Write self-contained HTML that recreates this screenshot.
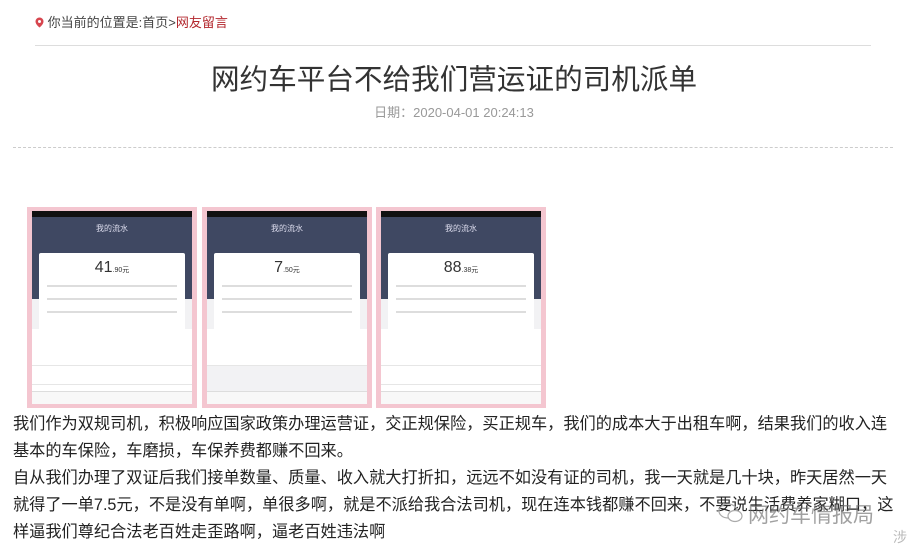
<!DOCTYPE html>
<html><head><meta charset="utf-8"><style>
body{margin:0;width:908px;height:551px;overflow:hidden;background:#fff;font-family:"Liberation Sans","Noto Sans CJK SC",sans-serif;position:relative}
.abs{position:absolute}
.phone{position:absolute;top:207px;width:170px;height:201px;background:#f4c6d0;}
.in{position:absolute;left:5px;top:4px;right:5px;bottom:4px;background:#f2f2f4;overflow:hidden}
.sb{height:6px;background:#111}
.hd{height:82px;background:#3f4862;position:relative;color:#dde}
.card{position:absolute;left:7px;top:36px;right:7px;height:82px;background:#fff;border-radius:2px;z-index:2}
.row{position:absolute;left:0;right:0;height:18px;border-bottom:1px solid #e6e6e6;font-size:6px;color:#666}
.nav{position:absolute;bottom:0;left:0;right:0;height:12px;background:#f8f8f8;border-top:1px solid #ddd}
.ln{position:absolute;left:8px;right:8px;height:2px;background:#ddd}
p{margin:0}
</style></head><body>
<div class="abs" style="left:35px;top:12px;font-size:13px;color:#444">
<svg width="9" height="11" viewBox="0 0 9 11" style="vertical-align:-1px"><path d="M4.5 0.5a4 4 0 0 1 4 4c0 3-4 6-4 6s-4-3-4-6a4 4 0 0 1 4-4z" fill="#d7464f"/><circle cx="4.5" cy="4.5" r="1.5" fill="#fff"/></svg>
你当前的位置是:首页&gt;<span style="color:#b3272d">网友留言</span></div>
<div class="abs" style="left:35px;top:45px;width:836px;height:1px;background:#ddd"></div>
<div class="abs" style="left:0;width:908px;top:57px;text-align:center;font-size:28.6px;color:#333">网约车平台不给我们营运证的司机派单</div>
<div class="abs" style="left:0;width:908px;top:102px;text-align:center;font-size:13px;color:#999">日期：2020-04-01 20:24:13</div>
<div class="abs" style="left:13px;top:147px;width:880px;border-top:1px dashed #ccc"></div>

<div class="phone" style="left:27px"><div class="in"><div class="sb"></div><div class="hd"><div class="abs" style="left:0;right:0;top:6px;text-align:center;font-size:8px">我的流水</div><div class="card"><div style="text-align:center;font-size:16px;color:#333;margin-top:6px">41<span style="font-size:7px">.90元</span></div><div class="ln" style="top:32px"></div><div class="ln" style="top:45px"></div><div class="ln" style="top:58px"></div></div></div>
<div class="row" style="top:118px;background:#fff"></div><div class="row" style="top:136px;background:#fff"></div><div class="row" style="top:155px;background:#fff"></div><div class="row" style="top:174px;background:#fff"></div><div class="nav"></div></div></div>
<div class="phone" style="left:202px"><div class="in"><div class="sb"></div><div class="hd"><div class="abs" style="left:0;right:0;top:6px;text-align:center;font-size:8px">我的流水</div><div class="card"><div style="text-align:center;font-size:16px;color:#333;margin-top:6px">7<span style="font-size:7px">.50元</span></div><div class="ln" style="top:32px"></div><div class="ln" style="top:45px"></div><div class="ln" style="top:58px"></div></div></div>
<div class="row" style="top:118px;background:#fff"></div><div class="row" style="top:136px;background:#fff"></div><div class="nav"></div></div></div>
<div class="phone" style="left:376px"><div class="in"><div class="sb"></div><div class="hd"><div class="abs" style="left:0;right:0;top:6px;text-align:center;font-size:8px">我的流水</div><div class="card"><div style="text-align:center;font-size:16px;color:#333;margin-top:6px">88<span style="font-size:7px">.38元</span></div><div class="ln" style="top:32px"></div><div class="ln" style="top:45px"></div><div class="ln" style="top:58px"></div></div></div>
<div class="row" style="top:118px;background:#fff"></div><div class="row" style="top:136px;background:#fff"></div><div class="row" style="top:155px;background:#fff"></div><div class="row" style="top:174px;background:#fff"></div><div class="nav"></div></div></div>

<div class="abs" style="left:13px;top:411px;white-space:nowrap;font-size:16.2px;line-height:27px;color:#222">
<p>我们作为双规司机，积极响应国家政策办理运营证，交正规保险，买正规车，我们的成本大于出租车啊，结果我们的收入连<br>基本的车保险，车磨损，车保养费都赚不回来。</p>
<p>自从我们办理了双证后我们接单数量、质量、收入就大打折扣，远远不如没有证的司机，我一天就是几十块，昨天居然一天<br>就得了一单7.5元，不是没有单啊，单很多啊，就是不派给我合法司机，现在连本钱都赚不回来，不要说生活费养家糊口，这<br>样逼我们尊纪合法老百姓走歪路啊，逼老百姓违法啊</p>
</div>
<svg class="abs" style="left:718px;top:502px" width="26" height="22" viewBox="0 0 26 22"><ellipse cx="10" cy="9" rx="9" ry="7" fill="none" stroke="#aaa" stroke-width="1.2"/><ellipse cx="17" cy="14" rx="7" ry="5.5" fill="#fff" stroke="#aaa" stroke-width="1.2"/></svg>
<div class="abs" style="left:748px;top:499px;font-size:21px;color:rgba(110,110,110,.65)">网约车情报局</div>
<div class="abs" style="left:893px;top:527px;font-size:14px;color:#bbb">涉</div>
</body></html>
